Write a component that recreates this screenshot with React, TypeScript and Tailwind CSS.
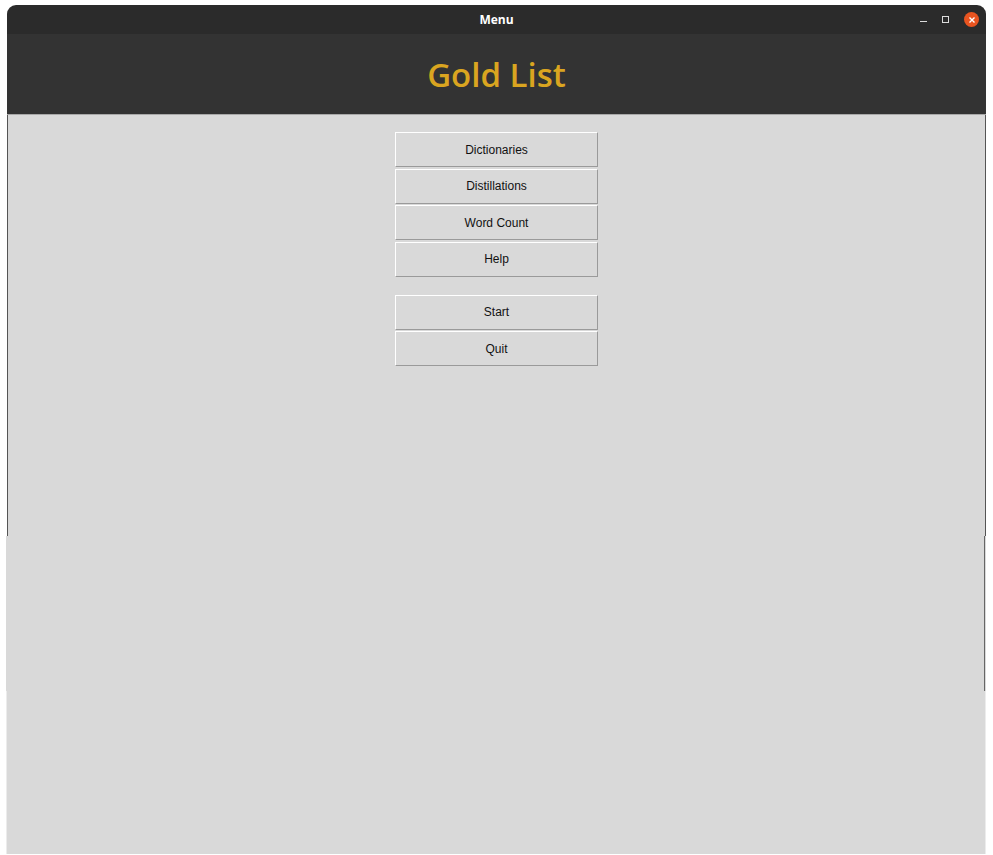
import React from "react";

export default function App() {
  const top = ["Dictionaries", "Distillations", "Word Count", "Help"];
  const bottom = ["Start", "Quit"];

  const btn = (label: string) => (
    <button
      key={label}
      className="flex h-[35px] w-[203px] items-center justify-center border border-t-white border-l-white border-r-[#9a9a9a] border-b-[#9a9a9a] bg-[#d9d9d9] text-[12px] text-[#111] [font-family:'Liberation_Sans',sans-serif]"
    >
      {label}
    </button>
  );

  return (
    <div className="h-[855px] w-[993px] overflow-hidden bg-white">
      <div className="ml-[7px] mt-[5px] w-[979px]">
        {/* title bar */}
        <div className="relative flex h-[29px] items-center justify-center rounded-t-[9px] bg-[#2b2b2b]">
          <span className="text-[12px] font-bold text-white [font-family:'Open_Sans',sans-serif]">
            Menu
          </span>
          <div className="absolute right-[7px] top-[7px] flex items-center gap-[15px]">
            <span className="mt-[3px] h-[1px] w-[7px] bg-[#dcdcdc]" />
            <span className="h-[7px] w-[7px] border border-[#dcdcdc]" />
            <span className="flex h-[15px] w-[15px] items-center justify-center rounded-full bg-[#e95420]">
              <svg width="8" height="8" viewBox="0 0 8 8">
                <path d="M1.5 1.5 L6.5 6.5 M6.5 1.5 L1.5 6.5" stroke="white" strokeWidth="1.4" />
              </svg>
            </span>
          </div>
        </div>

        {/* header */}
        <div className="flex h-[81px] items-center justify-center border-b border-[#a8a8a8] bg-[#333333]">
          <h1 className="mt-[2px] text-[33px] font-semibold text-[#daa520] [font-family:'Open_Sans',sans-serif]">
            Gold List
          </h1>
        </div>

        {/* content */}
        <div className="h-[421px] border-x border-l-[#555] border-r-[#555] bg-[#d9d9d9]">
          <div className="flex flex-col items-center pt-[17px]">
            <div className="flex flex-col gap-[1.5px]">{top.map(btn)}</div>
            <div className="mt-[18px] flex flex-col gap-[1.5px]">{bottom.map(btn)}</div>
          </div>
        </div>
      </div>

      {/* lower part of the window */}
      <div className="ml-[6px] flex h-[155px] w-[980px] bg-[#d9d9d9]">
        <div className="flex-1" />
        <div className="mr-[1px] w-[1px] bg-[#666]" />
      </div>
      <div className="ml-[6px] h-[163px] w-[980px] border-x border-[#ececec] bg-[#d9d9d9]" />
    </div>
  );
}
